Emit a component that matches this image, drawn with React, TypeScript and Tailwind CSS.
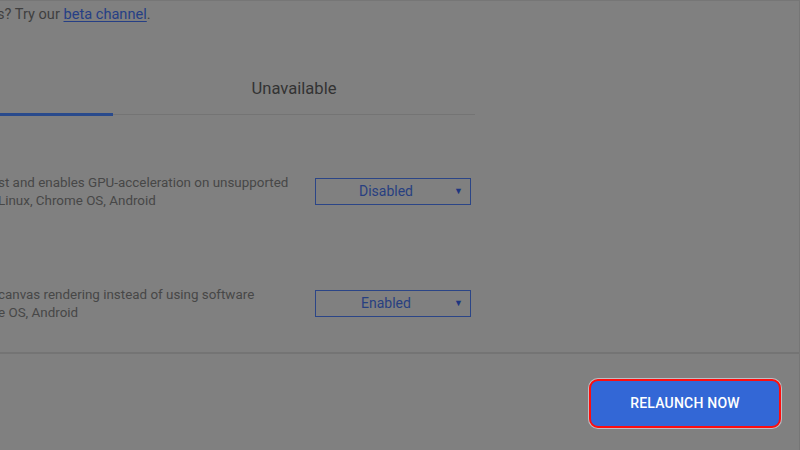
import React from "react";

interface FlagRowProps {
  lines: string[];
  value: string;
}

function FlagRow({ lines, value }: FlagRowProps) {
  return (
    <div className="flex items-start h-[112px]">
      <div className="w-[315px] shrink-0 -ml-[2px] text-[13.4px] leading-[18px] text-[#474747] whitespace-nowrap">
        {lines.map((l, i) => (
          <div key={i}>{l}</div>
        ))}
      </div>
      <div className="ml-[2px] mt-[4px] w-[156px] h-[27px] border border-[#2b4587] flex items-center relative">
        <span className="flex-1 text-center text-[14px] text-[#283f80] pr-[14px]">{value}</span>
        <span className="absolute right-[7px] top-[6px] text-[9px] text-[#1d3680]">▼</span>
      </div>
    </div>
  );
}

export default function App() {
  return (
    <div
      className="w-[800px] h-[450px] bg-[#808080] overflow-hidden flex flex-col border-t border-r border-[#767676]"
      style={{ fontFamily: "Roboto, 'Liberation Sans', sans-serif" }}
    >
      <div className="pt-[4px] -ml-[3px] text-[14.6px] leading-[18px] text-[#3f3f3f] whitespace-nowrap">
        s? Try our{" "}
        <span className="text-[#263f85] underline underline-offset-2">beta channel</span>.
      </div>

      <div className="mt-[39px] w-[475px] flex h-[53px] border-b border-[#747474]">
        <div className="w-[113px] border-b-[3px] border-[#294a8c] -mb-[2px]" />
        <div className="flex-1 flex items-center justify-center pt-[3px] text-[16.6px] text-[#333333]">
          Unavailable
        </div>
      </div>

      <div className="mt-[59px]">
        <FlagRow
          lines={["st and enables GPU-acceleration on unsupported", "Linux, Chrome OS, Android"]}
          value="Disabled"
        />
        <FlagRow
          lines={[" canvas rendering instead of using software", "e OS, Android"]}
          value="Enabled"
        />
      </div>

      <div className="-mt-[46px] h-[2px] bg-[#747474] w-full" />

      <div className="flex justify-end pr-[18px] mt-[25px]">
        <button className="w-[192px] h-[49px] rounded-[9px] bg-[#3367d6] border-2 border-[#ff0d0d] shadow-[0_0_0_1px_rgba(230,230,240,0.6)] text-white text-[14px] font-medium tracking-[0.2px]">
          RELAUNCH NOW
        </button>
      </div>
    </div>
  );
}
